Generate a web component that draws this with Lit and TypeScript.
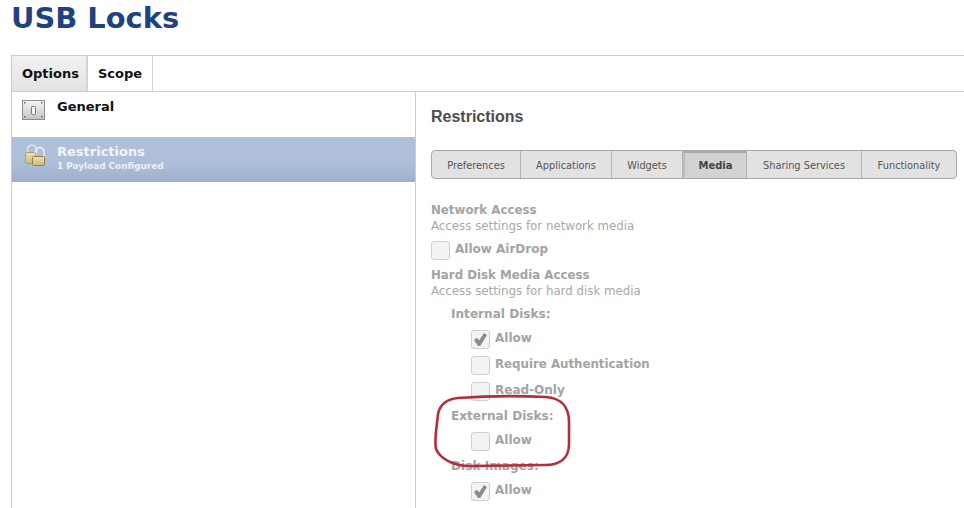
import { LitElement, html, css, svg } from "lit";
import { customElement } from "lit/decorators.js";

const check = svg`<svg class="tick" viewBox="0 0 19 19" width="19" height="19"><path d="M3 10 L6 7.8 L8.2 10.5 L13 3 L16 5 L9.2 16 L7 16 Z" fill="#8a8a8a"/></svg>`;

@customElement("app-root")
export class AppRoot extends LitElement {
  static styles = css`
    :host { display: block; width: 964px; height: 508px; overflow: hidden; position: relative; background: #fff; font-family: "DejaVu Sans", Verdana, sans-serif; }
    h1 { margin: 0; padding: 0 0 0 11px; height: 55px; box-sizing: border-box; font: bold 28.9px/36px "DejaVu Sans", sans-serif; color: #1f437f; }
    .shell { margin-left: 11px; border-top: 1px solid #ccc; border-left: 1px solid #ccc; height: 453px; box-sizing: border-box; display: flex; flex-direction: column; }
    .tabs { display: flex; height: 36px; box-sizing: border-box; border-bottom: 1px solid #ccc; flex: none; }
    .tab { font-size: 13px; font-weight: bold; color: #111; display: flex; align-items: center; box-sizing: border-box; }
    .tab.on { background: linear-gradient(#f2f2f2, #e2e2e2); border-right: 2px solid #d4d4d4; width: 76px; padding-left: 10px; }
    .tab.scope { width: 65px; padding-left: 10px; border-right: 1px solid #d4d4d4; }
    .body { display: flex; flex: 1; min-height: 0; }
    .left { width: 404px; flex: none; box-sizing: border-box; border-right: 1px solid #ccc; }
    .item { height: 45px; display: flex; padding-left: 10px; box-sizing: border-box; }
    .item svg { flex: none; }
    .item.gen { padding-top: 8px; }
    .item.gen .name { color: #111; margin-left: 12px; font-size: 13px; font-weight: bold; line-height: 14px; }
    .item.res { background: linear-gradient(#b1c0da 0%, #aebed9 60%, #9dafcd 100%); padding: 7px 0 0 11px; }
    .item.res .txt { color: #f2f4f8; }
    .item.res .name { font-size: 13px; font-weight: bold; line-height: 16px; }
    .item.res .sub { font-size: 8.9px; font-weight: bold; line-height: 12px; color: #eef1f6; }
    .lock { margin-left: 1px; margin-right: 0; }
    .right { flex: 1; padding: 0 7px 0 15px; min-width: 0; }
    h2 { margin: 0; padding-top: 15px; height: 58px; box-sizing: border-box; font: bold 16px/20px "Liberation Sans", sans-serif; color: #4c4c4c; }
    .seg { display: flex; height: 29px; box-sizing: border-box; border: 1px solid #a9a9a9; border-radius: 4px; background: #e2e2e2; color: #555; font-size: 9.8px; width: 526px; }
    .seg div { display: flex; align-items: center; justify-content: center; padding-top: 1px; border-right: 1px solid #b4b4b4; box-sizing: border-box; flex: none; }
    .seg div:last-child { border-right: 0; flex: 1; }
    .seg .w1 { width: 89px; }
    .seg .w2 { width: 91px; }
    .seg .w3 { width: 71px; }
    .seg .w4 { width: 64px; }
    .seg .w5 { width: 115px; }
    .seg .on { background: #d2d2d2; font-weight: bold; color: #444; border-top: 2px solid #a8a8a8; border-left: 2px solid #bdbdbd; font-size: 10px; padding-top: 0; }
    .form { padding-top: 23px; color: #a3a3a3; }
    .h { font-size: 11.8px; font-weight: bold; line-height: 16px; height: 16px; color: #a3a3a3; }
    .d { font-size: 11.8px; line-height: 16px; height: 16px; color: #a8a8a8; }
    .d.gap { height: 23px; }
    .row { display: flex; align-items: flex-start; height: 26px; font-size: 12px; font-weight: bold; color: #a3a3a3; }
    .row span { margin-left: 5px; line-height: 17px; }
    .row.s span { font-size: 11.8px; }
    .box { width: 19px; height: 19px; flex: none; box-sizing: border-box; border: 1px solid #cfcfcf; border-radius: 3px; background: #f3f3f3; position: relative; }
    .tick { position: absolute; left: -1px; top: -1px; }
    .sec { font-size: 12.1px; font-weight: bold; color: #a3a3a3; line-height: 16px; height: 24px; padding-left: 20px; }
    .ind { padding-left: 40px; }
    .ring { position: absolute; left: 430px; top: 390px; pointer-events: none; }
  `;

  private row(label: string, checked: boolean, cls = "ind") {
    return html`<div class="row ${cls}"><div class="box">${checked ? check : ""}</div><span>${label}</span></div>`;
  }

  render() {
    return html`
      <h1>USB Locks</h1>
      <div class="shell">
        <div class="tabs">
          <div class="tab on">Options</div>
          <div class="tab scope">Scope</div>
        </div>
        <div class="body">
          <div class="left">
            <div class="item gen">
              <svg width="23" height="20" viewBox="0 0 23 20">
                <defs><linearGradient id="pl" x1="0" y1="0" x2="0" y2="1"><stop offset="0" stop-color="#f6f6f6"/><stop offset="1" stop-color="#c4c4c4"/></linearGradient></defs>
                <rect x=".5" y=".5" width="22" height="19" fill="url(#pl)" stroke="#8c8c8c"/>
                <rect x="9.5" y="6.5" width="4" height="8" rx="1" fill="#f4f4f4" stroke="#777"/>
                <rect x="2" y="2" width="1.5" height="1.5" fill="#666"/><rect x="19" y="2" width="1.5" height="1.5" fill="#666"/>
                <rect x="2" y="16" width="1.5" height="1.5" fill="#666"/><rect x="19" y="16" width="1.5" height="1.5" fill="#666"/>
              </svg>
              <div class="name">General</div>
            </div>
            <div class="item res">
              <svg class="lock" width="33" height="24" viewBox="0 0 33 24">
                <defs><linearGradient id="gd" x1="0" y1="0" x2="0" y2="1"><stop offset="0" stop-color="#efe0b8"/><stop offset="1" stop-color="#cfb67a"/></linearGradient></defs>
                <path d="M3.5 9V5.5a4.5 4.5 0 0 1 9 0V9" fill="none" stroke="#e6e6e6" stroke-width="1.5"/>
                <path d="M11.5 13V6.5a4.5 4.5 0 0 1 8.5 0V13" fill="none" stroke="#eeeeee" stroke-width="1.5"/>
                <rect x="1.5" y="8.5" width="10" height="11" rx="1" fill="url(#gd)" stroke="#b39b63"/>
                <rect x="8.5" y="12.5" width="12" height="9" rx="1" fill="url(#gd)" stroke="#94803f"/>
              </svg>
              <div class="txt"><div class="name">Restrictions</div><div class="sub">1 Payload Configured</div></div>
            </div>
          </div>
          <div class="right">
            <h2>Restrictions</h2>
            <div class="seg">
              <div class="w1">Preferences</div>
              <div class="w2">Applications</div>
              <div class="w3">Widgets</div>
              <div class="on w4">Media</div>
              <div class="w5">Sharing Services</div>
              <div>Functionality</div>
            </div>
            <div class="form">
              <div class="h">Network Access</div>
              <div class="d gap">Access settings for network media</div>
              ${this.row("Allow AirDrop", false, "")}
              <div class="h">Hard Disk Media Access</div>
              <div class="d gap">Access settings for hard disk media</div>
              <div class="sec">Internal Disks:</div>
              ${this.row("Allow", true)}
              ${this.row("Require Authentication", false, "ind s")}
              ${this.row("Read-Only", false)}
              <div class="sec">External Disks:</div>
              ${this.row("Allow", false)}
              <div class="sec">Disk Images:</div>
              ${this.row("Allow", true)}
            </div>
          </div>
        </div>
      </div>
      <svg class="ring" width="145" height="82" viewBox="430 390 145 82">
        <path d="M458 398 C485 396 525 396 546 397 C562 398 569 408 569 422 L569 444 C569 458 560 465 545 465 L470 466 C452 466 440 458 436 449 C434 440 437 425 438 414 C440 404 448 399 458 398 Z" fill="none" stroke="#b52c3a" stroke-width="2.6"/>
      </svg>
    `;
  }
}
